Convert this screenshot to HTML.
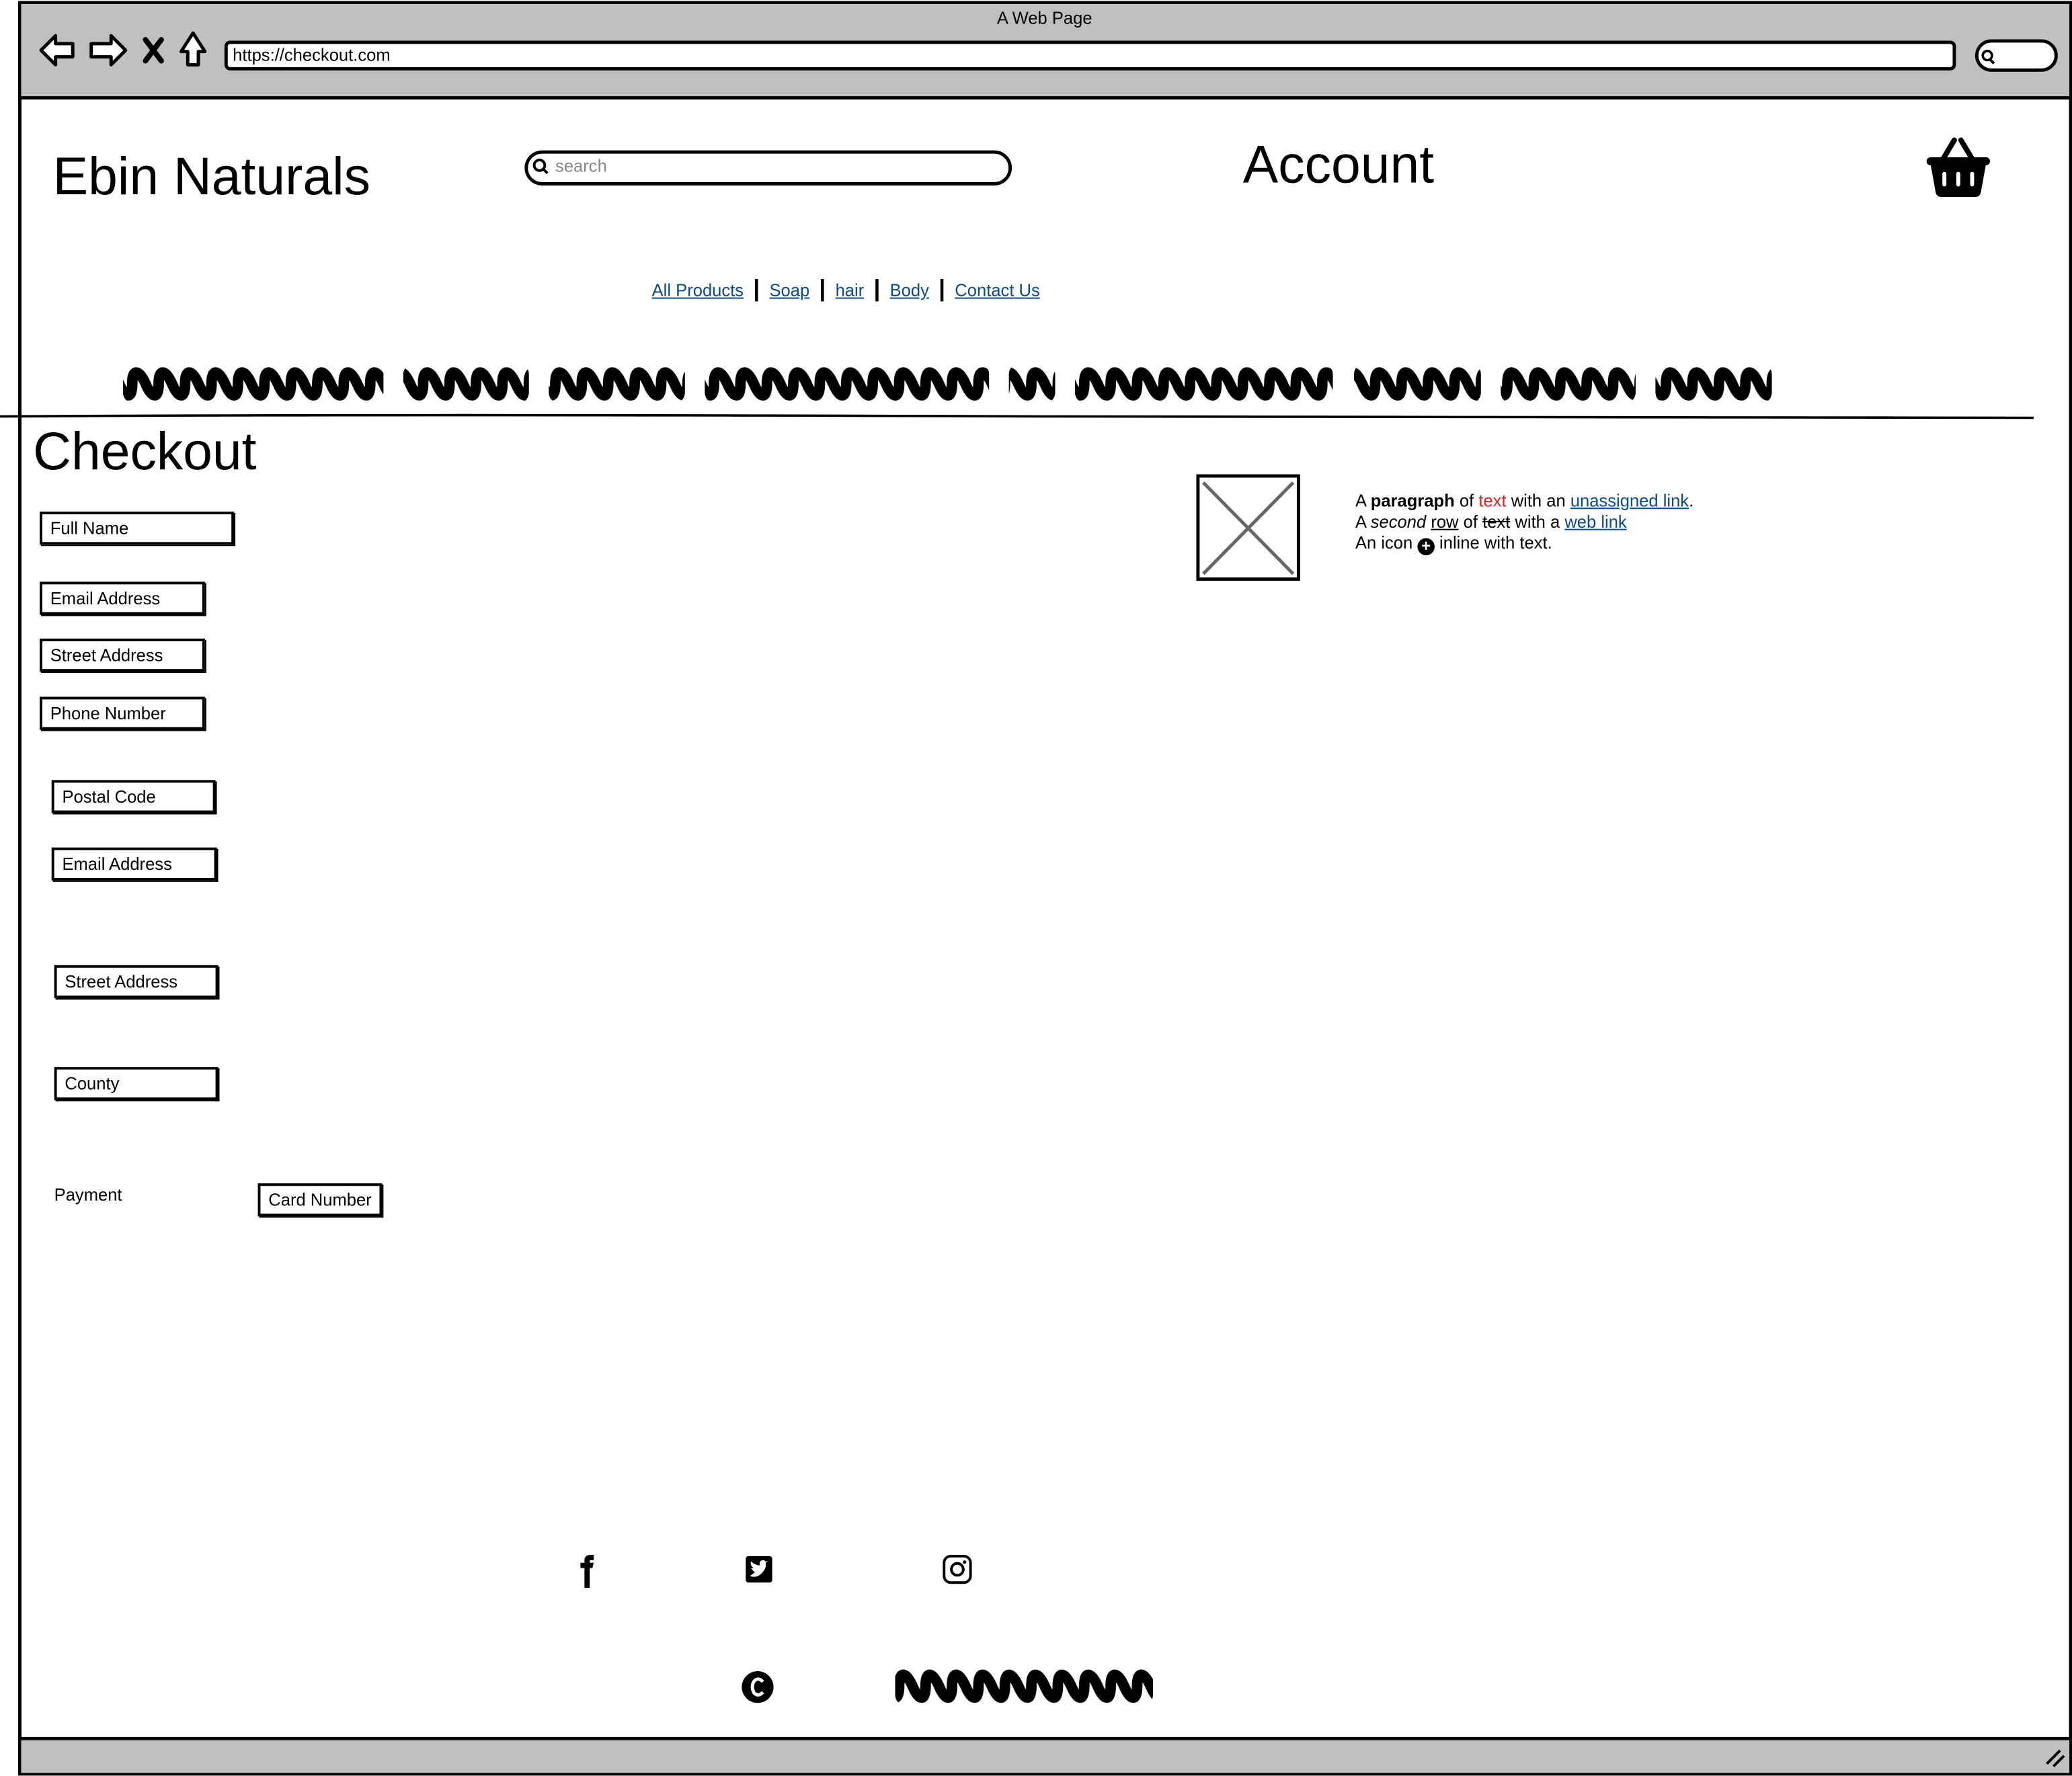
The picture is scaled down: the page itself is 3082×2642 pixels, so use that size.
<!DOCTYPE html>
<html><head><meta charset="utf-8"><style>
html,body{margin:0;padding:0;background:#fff;width:3082px;height:2642px;overflow:hidden}
#s{position:absolute;left:0;top:0;width:1567px;height:1343px;transform:scale(1.9668);transform-origin:0 0;font-family:"Liberation Sans",sans-serif;color:#000}
.a{position:absolute}
.in{position:absolute;border:2px solid #000;box-sizing:border-box;height:25px;font-size:13px;line-height:21px;padding-left:6px;box-shadow:1px 1px 0 #000;white-space:nowrap}
.nav a{color:#0b4a8f;text-decoration:underline}
</style></head><body><div id="s">
<svg class="a" style="left:0;top:0" width="1567" height="1343">
<defs><pattern id="w" x="0" y="275" width="20" height="30" patternUnits="userSpaceOnUse"><path d="M-10 15 C-5 27 0 27 0 15 C0 4 5 4 10 15 C15 27 20 27 20 15 C20 4 25 4 30 15" stroke="#000" stroke-width="8" fill="none"/></pattern>
<pattern id="w2" x="0" y="1260" width="20" height="30" patternUnits="userSpaceOnUse"><path d="M-10 15 C-5 27 0 27 0 15 C0 4 5 4 10 15 C15 27 20 27 20 15 C20 4 25 4 30 15" stroke="#000" stroke-width="8" fill="none"/></pattern></defs>
<rect x="15" y="2" width="1551" height="1340" fill="#fff" stroke="#000" stroke-width="2.5"/>
<rect x="16" y="3" width="1549" height="71" fill="#c0c0c0"/>
<line x1="15" y1="74" x2="1566" y2="74" stroke="#000" stroke-width="2.5"/>
<rect x="16" y="1315" width="1549" height="26" fill="#c0c0c0"/>
<line x1="15" y1="1315" x2="1566" y2="1315" stroke="#000" stroke-width="2.5"/>
<path d="M1548 1334 L1558 1324 M1553 1336 L1561 1328" stroke="#000" stroke-width="2"/>
<rect x="171" y="32" width="1307" height="20" rx="3" fill="#fff" stroke="#000" stroke-width="2.5"/>
<rect x="1495" y="31" width="60" height="22" rx="11" fill="#fff" stroke="#000" stroke-width="2.5"/>
<circle cx="1503" cy="42" r="3.5" fill="none" stroke="#000" stroke-width="1.8"/><line x1="1505" y1="45" x2="1508" y2="48" stroke="#000" stroke-width="2"/>
<path d="M31 38 L42 27 L42 33 L55 33 L55 43 L42 43 L42 49 Z" fill="#fff" stroke="#000" stroke-width="2.5" stroke-linejoin="round"/>
<path d="M95 38 L84 27 L84 33 L69 33 L69 43 L84 43 L84 49 Z" fill="#fff" stroke="#000" stroke-width="2.5" stroke-linejoin="round"/>
<path d="M110 30 L122 46 M122 30 L110 46" stroke="#000" stroke-width="4" stroke-linecap="round"/>
<path d="M146 25 L155 39 L150 39 L150 49 L142 49 L142 39 L137 39 Z" fill="#fff" stroke="#000" stroke-width="2.5" stroke-linejoin="round"/>
<rect x="398" y="115" width="366" height="24" rx="12" fill="#fff" stroke="#000" stroke-width="2.5"/>
<circle cx="408" cy="125" r="4" fill="none" stroke="#000" stroke-width="2"/><line x1="411" y1="128" x2="414" y2="131" stroke="#000" stroke-width="2"/>
<g fill="url(#w)">
<rect x="93" y="275" width="197" height="30" rx="8"/><rect x="305" y="275" width="95" height="30" rx="8"/><rect x="415" y="275" width="103" height="30" rx="8"/><rect x="533" y="275" width="215" height="30" rx="8"/><rect x="763" y="275" width="35" height="30" rx="8"/><rect x="813" y="275" width="195" height="30" rx="8"/><rect x="1024" y="275" width="96" height="30" rx="8"/><rect x="1135" y="275" width="102" height="30" rx="8"/><rect x="1252" y="275" width="88" height="30" rx="8"/>
</g>
<rect x="677" y="1260" width="195" height="30" rx="8" fill="url(#w2)"/>
<path d="M0 315 Q300 313 800 315 T1538 316" stroke="#000" stroke-width="1.8" fill="none"/>
<path d="M1469 121 L1478 106 M1492 121 L1483 106" stroke="#000" stroke-width="4" stroke-linecap="round"/>
<rect x="1457" y="119" width="48" height="6" rx="3"/>
<path d="M1460 124 L1502 124 L1498 146 Q1497 149 1494 149 L1468 149 Q1465 149 1464 146 Z"/>
<rect x="1469" y="130" width="3" height="11" rx="1.5" fill="#fff"/><rect x="1479.5" y="130" width="3" height="11" rx="1.5" fill="#fff"/><rect x="1490" y="130" width="3" height="11" rx="1.5" fill="#fff"/>
<rect x="906" y="360" width="76" height="78" fill="#fff" stroke="#000" stroke-width="2.5"/>
<path d="M910 365 L978 434 M978 365 L910 434" stroke="#666" stroke-width="2.5"/>
<path d="M442 1201 L442 1186 L439 1186 L439 1182 L442 1182 L442 1180 Q442 1176 447 1176 L449 1176 L449 1180 L447 1180 Q446 1180 446 1181 L446 1182 L449 1182 L448 1186 L446 1186 L446 1201 Z"/>
<rect x="564" y="1177" width="20" height="20" rx="2"/>
<path d="M567 1192 Q572 1194 576 1190 Q580 1186 579 1182 L581 1181 L579 1181 Q577 1179 575 1181 Q574 1183 575 1184 Q571 1184 568 1181 Q567 1184 570 1186 L568 1186 Q570 1189 571 1189 Q569 1191 567 1192 Z" fill="#fff"/>
<rect x="714" y="1177" width="20" height="20" rx="5" fill="none" stroke="#000" stroke-width="2"/>
<circle cx="724" cy="1187" r="4.5" fill="none" stroke="#000" stroke-width="2"/><circle cx="729.5" cy="1181.5" r="1.3"/>
<ellipse cx="573" cy="1276" rx="12" ry="12"/>
<path d="M577 1272 Q573 1268 570 1272 Q568 1276 570 1280 Q573 1284 577 1280" stroke="#fff" stroke-width="2.5" fill="none"/>
</svg>
<div class="a" style="left:0;top:6px;width:1580px;text-align:center;font-size:13px">A Web Page</div>
<div class="a" style="left:176px;top:34px;font-size:13px">https://checkout.com</div>
<div class="a" style="left:420px;top:118px;font-size:13px;color:#888">search</div>
<div class="a" style="left:40px;top:112px;font-size:40px">Ebin Naturals</div>
<div class="a" style="left:940px;top:103px;font-size:40px">Account</div>
<div class="a nav" style="left:493px;top:208px;font-size:13px;white-space:nowrap"><a>All Products</a> &nbsp;<b style="font-size:18px">|</b>&nbsp; <a>Soap</a> &nbsp;<b style="font-size:18px">|</b>&nbsp; <a>hair</a> &nbsp;<b style="font-size:18px">|</b>&nbsp; <a>Body</a> &nbsp;<b style="font-size:18px">|</b>&nbsp; <a>Contact Us</a></div>
<div class="a" style="left:25px;top:320px;font-size:40px">Checkout</div>
<div class="in" style="left:30px;top:387px;width:147px">Full Name</div>
<div class="in" style="left:30px;top:440px;width:125px">Email Address</div>
<div class="in" style="left:30px;top:483px;width:125px">Street Address</div>
<div class="in" style="left:30px;top:527px;width:125px">Phone Number</div>
<div class="in" style="left:39px;top:590px;width:124px">Postal Code</div>
<div class="in" style="left:39px;top:641px;width:125px">Email Address</div>
<div class="in" style="left:41px;top:730px;width:124px">Street Address</div>
<div class="in" style="left:41px;top:807px;width:124px">County</div>
<div class="a" style="left:41px;top:896px;font-size:13px">Payment</div>
<div class="in" style="left:195px;top:895px;width:94px">Card Number</div>
<div class="a" style="left:1025px;top:371px;font-size:13px;line-height:16px;white-space:nowrap">A <b>paragraph</b> of <span style="color:#d22">text</span> with an <a style="color:#0b4a8f;text-decoration:underline">unassigned link</a>.<br>A <i>second</i> <u>row</u> of <s>text</s> with a <a style="color:#0b4a8f;text-decoration:underline">web link</a><br>An icon <span style="display:inline-block;width:13px;height:13px;border-radius:50%;background:#000;color:#fff;font-size:12px;line-height:13px;text-align:center;font-weight:bold;vertical-align:-2px">+</span> inline with text.</div>
</div></body></html>
